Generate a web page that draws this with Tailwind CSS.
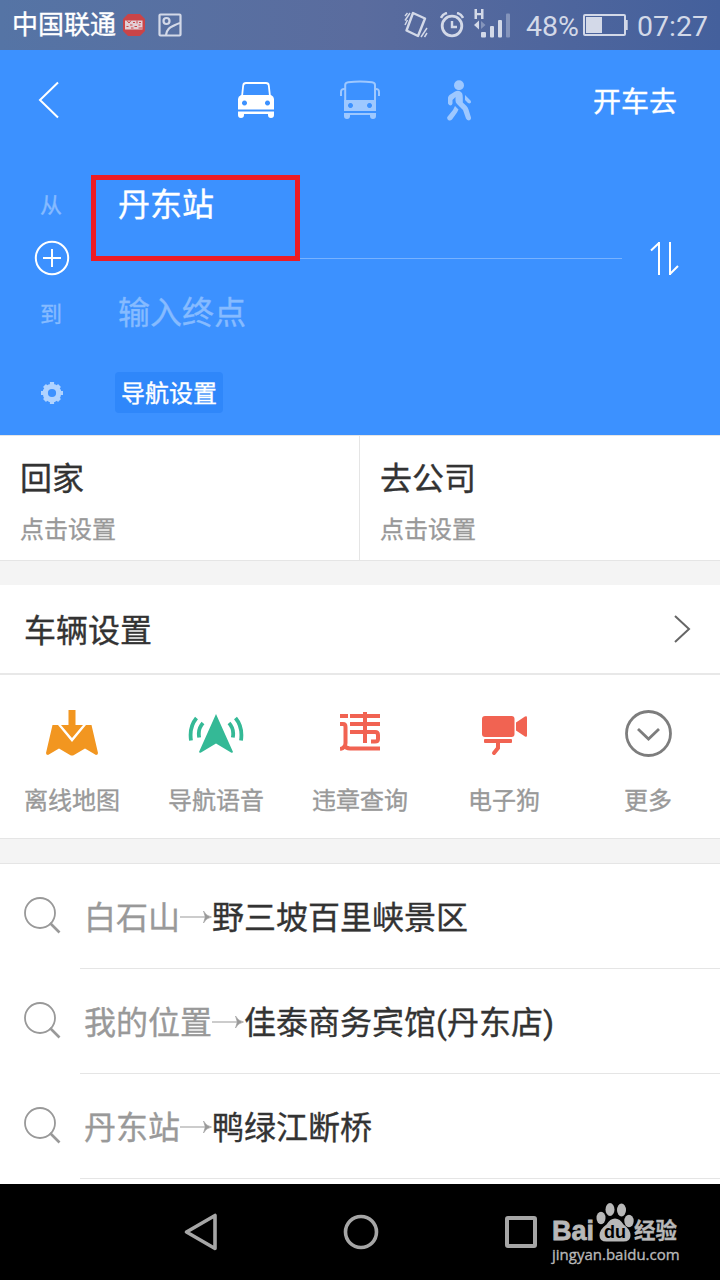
<!DOCTYPE html>
<html lang="zh-CN">
<head>
    <meta charset="UTF-8">
    <meta name="viewport" content="width=device-width, initial-scale=1.0">
    <title>路线规划</title>
    <script src="https://cdn.jsdelivr.net/npm/@tailwindcss/browser@4"></script>
    <style>
        body {
            font-family: Roboto, 'Noto Sans CJK SC', sans-serif;
        }
    </style>
</head>
<body class="bg-white text-[#333]">
    <div class="relative w-[720px] h-[1280px] overflow-hidden flex flex-col [-webkit-text-stroke:0.35px]">

        <!-- 状态栏 -->
        <header class="h-[50px] shrink-0 flex items-center pl-3 pr-3 bg-linear-to-r from-[#5574a5] via-[#5a6c9e] to-[#44609c] text-[#d3d9e8]">
            <span class="text-[26px] leading-[50px] text-white">中国联通</span>
            <svg class="ml-[7px]" width="22" height="22" viewBox="0 0 22 22">
                <path d="M5 0h12l5 5v12l-5 5H5l-5-5V5z" fill="#c94448"/>
                <path d="M2 6.500h17.500v9H2z" fill="#e3cfd5"/>
                <path d="M4 6.500l2 2.500 2-2.500M10 8.500h2M14 6.500v3M16 8.500h2M3.500 12.500h2M7 11h2.500M8 14h2.500M11.500 12.500h2.500M15.500 11h2M15.500 14h4" fill="none" stroke="#c94448"/>
            </svg>
            <svg class="ml-[13px]" width="24" height="24" viewBox="0 0 24 24" fill="none" stroke="#d3d9e8" stroke-width="2.200">
                <rect x="1.500" y="1.500" width="21" height="21" rx="1"/>
                <circle cx="8.500" cy="8" r="3"/>
                <path d="M8 22c1-7 5-8 8-9.500s4-2 6-2.500"/>
            </svg>
            <div class="ml-auto flex items-center [-webkit-text-stroke:0]">
                <svg width="24" height="28" viewBox="0 0 24 28" fill="none" stroke="#d3d9e8" stroke-width="2">
                    <path d="M9 2l12 5.500-7 17.500-11.500-5.500z" stroke-width="2.400" stroke-linejoin="round"/>
                    <path d="M1 5l2.500-3M1 9.500L6 2M1 14l2.500-5M17 26l6-9M20.500 26l2.500-4" stroke-width="1.500"/>
                </svg>
                <svg class="ml-[12px]" width="24" height="26" viewBox="0 0 24 26" fill="none" stroke="#d3d9e8">
                    <circle cx="12" cy="14" r="9.800" stroke-width="2.800"/>
                    <path d="M12 9v6h5" stroke-width="2.400"/>
                    <path d="M1 6q1.500-4 6-5M23 6q-1.500-4-6-5" stroke-width="2.600"/>
                </svg>
                <svg class="ml-[10px] -mt-[2px]" width="36" height="30" viewBox="0 0 36 30" fill="#d3d9e8">
                    <path d="M.5 0H3v4h4V0h2.500v10H7V6.300H3V10H.5z"/>
                    <path d="M0 16l5-4.500v9z"/>
                    <path d="M11.500 16L7 12v8z" opacity=".4"/>
                    <rect x="7" y="23" width="5" height="5.500" rx="1"/>
                    <rect x="16" y="17" width="4" height="11.500" rx="1"/>
                    <rect x="24" y="11" width="4" height="17.500" rx="1"/>
                    <rect x="32" y="4.500" width="4" height="24" rx="1" opacity=".4"/>
                </svg>
                <span class="ml-[16px] w-[52px] text-[28.500px] leading-[50px] whitespace-nowrap pt-[4px]">48%</span>
                <svg class="ml-[5px]" width="45" height="24" viewBox="0 0 45 24" fill="#d3d9e8">
                    <rect x="1" y="2" width="41" height="20" rx="1" fill="none" stroke="#d3d9e8" stroke-width="2"/>
                    <rect x="3" y="4" width="16" height="16"/>
                    <path d="M43 7h1.700v10H43z"/>
                </svg>
                <span class="ml-[9px] w-[71px] text-[28.500px] leading-[50px] whitespace-nowrap pt-[4px]">07:27</span>
            </div>
        </header>

        <!-- 路线输入区 -->
        <section class="h-[385px] shrink-0 bg-[#3c91ff] text-white">
            <div class="h-[100px] flex items-center pl-[38px] pr-[43px]">
                <svg width="22" height="38" viewBox="0 0 22 38" fill="none" stroke="#fff" stroke-width="2"><path d="M20 1.500L2 19l18 17.500"/></svg>
                <svg class="ml-[178px]" width="36" height="36" viewBox="0 0 36 36">
                    <path d="M4 14.500L5.200 3.500Q5.500 1 8 1h20q2.500 0 2.800 2.500L32 14.500" fill="none" stroke="#fff" stroke-width="1.800"/>
                    <path fill="#fff" fill-rule="evenodd" d="M3 13h30q3 1.500 3 4v10.500H0V17q0-2.500 3-4zM6.500 18.500a2.500 2.500 0 1 0 .01 0zM29.500 18.500a2.500 2.500 0 1 0 .01 0z"/>
                    <path fill="#fff" d="M0 29.500h36V33q0 3-3 3t-3-3v-1H6v1q0 3-3 3t-3-3z"/>
                </svg>
                <svg class="ml-[66px]" width="40" height="40" viewBox="0 0 40 40" fill="#9ec8ff">
                    <path d="M5.200 22V5q0-2.500 3-2.800Q20 .8 32 2.200q3 .3 3 2.800v17" fill="none" stroke="#9ec8ff" stroke-width="2"/>
                    <path d="M5 9q-4-.5-4 3v4M35 9q4-.5 4 3v4" fill="none" stroke="#9ec8ff" stroke-width="2"/>
                    <path fill-rule="evenodd" d="M4 20h32v11H4zM10.500 23a2.500 2.500 0 1 0 .01 0zM29.500 23a2.500 2.500 0 1 0 .01 0z"/>
                    <path d="M4 33h32v3q0 3-3 3t-3-3v-1H10v1q0 3-3 3t-3-3z"/>
                </svg>
                <svg class="ml-[67px]" width="24" height="41" viewBox="0 0 24 41" fill="#9ec8ff">
                    <circle cx="12" cy="5.200" r="5"/>
                    <path d="M8 11.500q4-2 7 1.500.8 1.500.8 5v4.500L19.500 26q1.500 1.500 2 3.500l2.500 8q.3 2.500-2 3-2 0-3-2l-3-8.500-6-6q-1.500-1.500-1.500-3.500V17l-3 3v3.500q-.5 2-2 2t-2.500-2v-6Q1.300 16 2.500 15z"/>
                    <path d="M8 26l3.500 3.500-1.500 3-5 7q-1.500 1.500-3.500.7Q-.3 39 .3 37L6 30zM18 15l5.500 5.500q1 1.500 0 2.500-1 .8-2.500 0l-3-3z"/>
                </svg>
                <span class="ml-auto text-[28px] leading-[40px] pt-[5px]">开车去</span>
            </div>
            <div class="mt-[28px] h-[54px] flex items-center pl-[40px]">
                <span class="w-[78px] text-[22px] text-[#86bbff] leading-[54px] pt-[2px]">从</span>
                <span class="text-[32px] leading-[54px]">丹东站</span>
            </div>
            <div class="h-[52px] flex items-center pl-[34px]">
                <svg width="36" height="36" viewBox="0 0 36 36" fill="none" stroke="#fff" stroke-width="2"><circle cx="18" cy="18" r="16.200"/><path d="M18 9v18M9 18h18"/></svg>
                <div class="ml-[48px] w-[504px] h-px bg-[#77b2ff]"></div>
                <svg class="ml-[28px]" width="29" height="36" viewBox="0 0 29 36" fill="none" stroke="#fff" stroke-width="2"><path d="M1 10.500l8-7.500M9 2v33M20 2v33M20 34l8-8"/></svg>
            </div>
            <div class="h-[58px] flex items-center pl-[40px] text-[#86bbff]">
                <span class="w-[78px] text-[22px] leading-[58px] pt-[3px]">到</span>
                <span class="text-[32px] leading-[58px]">输入终点</span>
            </div>
            <div class="mt-[30px] h-[41px] flex items-center pl-[41px]">
                <svg width="22" height="22" viewBox="0 0 22 22">
                    <circle cx="11" cy="11" r="6.700" fill="none" stroke="#b0d3ff" stroke-width="5.200"/>
                    <path d="M11 0v4M11 18v4M0 11h4M18 11h4M3.500 3.500L6 6M16 16l2.500 2.500M3.500 18.500L6 16M16 6l2.500-2.500" stroke="#b0d3ff" stroke-width="4.200"/>
                </svg>
                <span class="ml-[52px] w-[108px] h-[41px] rounded bg-[#2f87fa] text-center text-[24px] leading-[45px]">导航设置</span>
            </div>
        </section>

        <!-- 回家 / 去公司 -->
        <section class="h-[126px] shrink-0 flex border-y border-[#e5e5e5]">
            <div class="w-[360px] border-r border-[#e5e5e5] pl-5 pt-[17px]">
                <p class="text-[32px] leading-[52px]">回家</p>
                <p class="text-[24px] leading-[50px] text-[#999]">点击设置</p>
            </div>
            <div class="pl-5 pt-[17px]">
                <p class="text-[32px] leading-[52px]">去公司</p>
                <p class="text-[24px] leading-[50px] text-[#999]">点击设置</p>
            </div>
        </section>
        <div class="h-[24px] shrink-0 bg-[#f4f4f4]"></div>

        <!-- 车辆设置 -->
        <section class="h-[90px] shrink-0 flex items-center justify-between pl-6 pr-[29px] border-b-2 border-[#e8e8e8]">
            <span class="text-[32px] leading-[84px] pt-[4px]">车辆设置</span>
            <svg width="17" height="28" viewBox="0 0 17 28" fill="none" stroke="#666" stroke-width="2"><path d="M1 1l14 13L1 27"/></svg>
        </section>

        <!-- 工具入口 -->
        <section class="h-[163px] shrink-0 grid grid-cols-5 text-center text-[24px] text-[#999]">
            <div class="flex flex-col items-center pt-[32px]">
                <svg width="52" height="54" viewBox="0 0 52 54" fill="#f29620">
                    <path d="M22.500 3h7v15H37L26 31 15 18h7.500z"/>
                    <path d="M6.500 18H12l14 17 14-17h5.500L52 46q0 2-2 2l-11-6.500L28 48q-2 1.200-4 0l-11-6.500L2 48q-2 0-2-2z"/>
                </svg>
                <span class="leading-[40px] mt-[20px]">离线地图</span>
            </div>
            <div class="flex flex-col items-center pt-[32px]">
                <svg width="56" height="54" viewBox="0 0 56 54" fill="none" stroke="#34b996" stroke-width="3.800">
                    <path d="M28 7l17 38q-.5 1.200-2 .5L28 36.500l-15 9q-1.500.7-2-.5z" fill="#34b996" stroke="none"/>
                    <path d="M8.500 11Q1 20 3 33.500M15 16Q9.500 22 11.200 30.500M47.500 11Q55 20 53 33.500M41 16q5.500 6 3.800 14.500"/>
                </svg>
                <span class="leading-[40px] mt-[20px]">导航语音</span>
            </div>
            <div class="flex flex-col items-center pt-[32px]">
                <svg width="40" height="54" viewBox="0 0 40 54" fill="none" stroke="#f16352" stroke-width="4">
                    <path d="M0 9h8M10 9h30M10 17h30M25 5v31M10 25h25q3 0 3 3v4q0 2.500-3 2.500h-4M0 17h3q2.500 0 2.500 3v16q0 5-5.500 6M4 38q2 3.500 6 3.500h30"/>
                </svg>
                <span class="leading-[40px] mt-[20px]">违章查询</span>
            </div>
            <div class="flex flex-col items-center pt-[32px]">
                <svg class="ml-px" width="46" height="54" viewBox="0 0 46 54" fill="#f16352">
                    <rect x="0" y="9" width="32.500" height="21" rx="3"/>
                    <path d="M34 15.500L43 9.500q2-1 2 1v18q0 2-2 1l-9-6z"/>
                    <rect x="2" y="32" width="28" height="4" rx="1"/>
                    <path d="M16 35v6l-4 5" fill="none" stroke="#f16352" stroke-width="4" stroke-linecap="round"/>
                </svg>
                <span class="leading-[40px] mt-[20px]">电子狗</span>
            </div>
            <div class="flex flex-col items-center pt-[32px]">
                <svg width="48" height="54" viewBox="0 0 48 54" fill="none" stroke="#7d7d7d" stroke-width="2.800">
                    <circle cx="24.500" cy="26.500" r="22"/><path d="M14 22l10.500 10L35 22"/>
                </svg>
                <span class="leading-[40px] mt-[20px]">更多</span>
            </div>
        </section>
        <div class="h-[26px] shrink-0 bg-[#f4f4f4] border-y border-[#e5e5e5]"></div>

        <!-- 历史路线 -->
        <ul class="h-[320px] shrink-0 text-[32px] leading-[100px]">
            <li class="h-[105px] flex items-center pl-6">
                <svg class="-mt-[3px]" width="37" height="37" viewBox="0 0 37 37" fill="none" stroke="#999"><circle cx="15.500" cy="15.500" r="15" stroke-width="1.800" transform="translate(.5 .5)"/><path d="M26 26l9.500 9.500" stroke-width="2.600"/></svg>
                <div class="ml-[19px] h-full flex-1 flex items-center border-b border-[#e5e5e5] pl-1 pt-[3px]">
                    <span class="text-[#999]">白石山</span>
                    <svg class="-mt-[2px]" width="32" height="16" viewBox="0 0 32 16"><path d="M0 8h29" stroke="#aaa" stroke-width="1.200"/><path d="M23.500 2Q26 7 31.500 8 26 9 23.500 14l1.800-6z" fill="#999" stroke="#999" stroke-width=".6"/></svg>
                    <span>野三坡百里峡景区</span>
                </div>
            </li>
            <li class="h-[105px] flex items-center pl-6">
                <svg class="-mt-[3px]" width="37" height="37" viewBox="0 0 37 37" fill="none" stroke="#999"><circle cx="15.500" cy="15.500" r="15" stroke-width="1.800" transform="translate(.5 .5)"/><path d="M26 26l9.500 9.500" stroke-width="2.600"/></svg>
                <div class="ml-[19px] h-full flex-1 flex items-center border-b border-[#e5e5e5] pl-1 pt-[3px]">
                    <span class="text-[#999]">我的位置</span>
                    <svg class="-mt-[2px]" width="32" height="16" viewBox="0 0 32 16"><path d="M0 8h29" stroke="#aaa" stroke-width="1.200"/><path d="M23.500 2Q26 7 31.500 8 26 9 23.500 14l1.800-6z" fill="#999" stroke="#999" stroke-width=".6"/></svg>
                    <span>佳泰商务宾馆(丹东店)</span>
                </div>
            </li>
            <li class="h-[105px] flex items-center pl-6">
                <svg class="-mt-[3px]" width="37" height="37" viewBox="0 0 37 37" fill="none" stroke="#999"><circle cx="15.500" cy="15.500" r="15" stroke-width="1.800" transform="translate(.5 .5)"/><path d="M26 26l9.500 9.500" stroke-width="2.600"/></svg>
                <div class="ml-[19px] h-full flex-1 flex items-center border-b border-[#e5e5e5] pl-1 pt-[3px]">
                    <span class="text-[#999]">丹东站</span>
                    <svg class="-mt-[2px]" width="32" height="16" viewBox="0 0 32 16"><path d="M0 8h29" stroke="#aaa" stroke-width="1.200"/><path d="M23.500 2Q26 7 31.500 8 26 9 23.500 14l1.800-6z" fill="#999" stroke="#999" stroke-width=".6"/></svg>
                    <span>鸭绿江断桥</span>
                </div>
            </li>
        </ul>

        <!-- 系统导航栏 -->
        <nav class="h-[96px] shrink-0 bg-black flex items-center pl-[184px]">
            <svg width="34" height="38" viewBox="0 0 34 38" fill="none" stroke="#a6a6a6" stroke-width="3.600" stroke-linejoin="round"><path d="M31 2.500v33L2.500 19z"/></svg>
            <svg class="ml-[125px]" width="36" height="36" viewBox="0 0 36 36" fill="none" stroke="#a6a6a6" stroke-width="3.600"><circle cx="18" cy="18" r="15.500"/></svg>
            <svg class="ml-[126px]" width="32" height="32" viewBox="0 0 32 32" fill="none" stroke="#a6a6a6" stroke-width="4"><rect x="2" y="2" width="28" height="28" rx="1"/></svg>
        </nav>

        <!-- 水印 -->
        <div class="absolute left-[552px] top-[1202px] w-[128px] h-[64px] text-[#b8b8b8]">
            <div class="flex items-start h-[43px]">
                <span class="w-[44px] text-[27px] leading-[30px] mt-[14px] font-bold font-['Liberation_Sans'] [-webkit-text-stroke:0.8px]">Bai</span>
                <div class="relative w-[38px] h-[42px]">
                    <svg width="38" height="42" viewBox="0 0 38 42" fill="#b8b8b8">
                        <ellipse cx="5" cy="16" rx="4.500" ry="6.200"/><ellipse cx="14" cy="7.500" rx="4.500" ry="6.500"/><ellipse cx="25.500" cy="8" rx="4.500" ry="6.500"/><ellipse cx="33" cy="19" rx="4.700" ry="6.200"/>
                        <path d="M19 16.500q5 0 8.500 6 7 5 7 11 0 6-7 6h-17q-7 0-7-6 0-6 7-11 3.500-6 8.500-6z"/>
                    </svg>
                    <span class="absolute left-[8px] top-[20px] text-[18px] leading-[20px] font-bold text-black font-['Liberation_Sans'] [-webkit-text-stroke:0]">du</span>
                </div>
                <span class="text-[21.500px] leading-[30px] mt-[14px] font-bold">经验</span>
            </div>
            <p class="text-[15px] leading-[18px] whitespace-nowrap font-['Open_Sans']">jingyan.baidu.com</p>
        </div>

        <!-- 起点高亮框 -->
        <div class="absolute left-[91px] top-[175px] w-[209px] h-[86px] border-5 border-[#ed1c24]"></div>
    </div>
</body>
</html>
